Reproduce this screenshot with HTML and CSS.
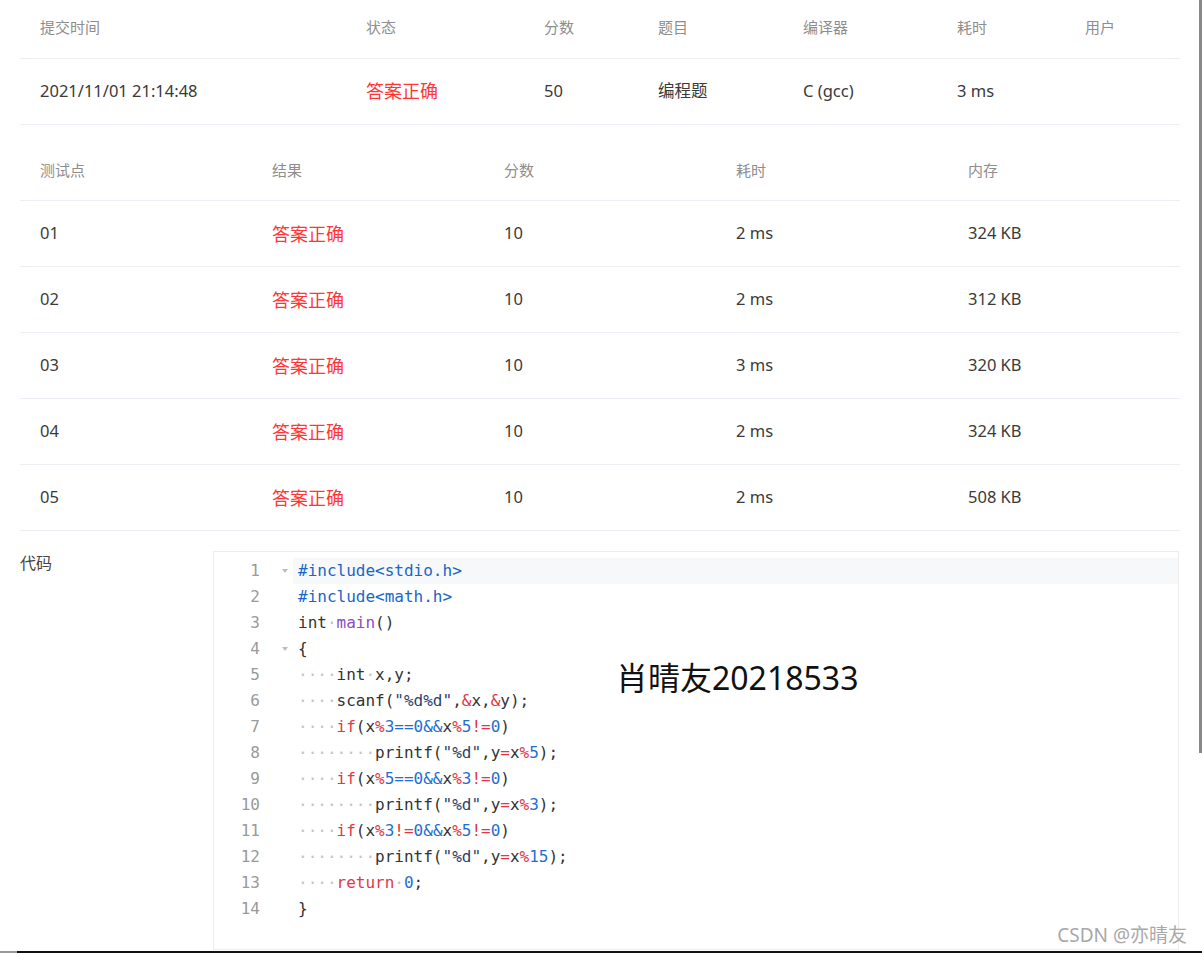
FILE: index.html
```html
<!DOCTYPE html>
<html lang="zh-CN">
<head>
    <meta charset="UTF-8">
    <meta name="viewport" content="width=device-width, initial-scale=1.0">
    <title>提交详情</title>
    <link rel="stylesheet" href="styles.css">
</head>
<body>
    <div class="page">
        <table class="submit-table">
            <colgroup>
                <col class="c-time"><col class="c-status"><col class="c-score"><col class="c-problem">
                <col class="c-compiler"><col class="c-cost"><col class="c-user">
            </colgroup>
            <tr>
                <th>提交时间</th><th>状态</th><th>分数</th><th>题目</th><th>编译器</th><th>耗时</th><th>用户</th>
            </tr>
            <tr>
                <td>2021/11/01 21:14:48</td>
                <td><span class="ok">答案正确</span></td>
                <td>50</td>
                <td>编程题</td>
                <td>C (gcc)</td>
                <td>3 ms</td>
                <td></td>
            </tr>
        </table>

        <table class="case-table">
            <tr>
                <th>测试点</th><th>结果</th><th>分数</th><th>耗时</th><th>内存</th>
            </tr>
            <tr><td>01</td><td><span class="ok">答案正确</span></td><td>10</td><td>2 ms</td><td>324 KB</td></tr>
            <tr><td>02</td><td><span class="ok">答案正确</span></td><td>10</td><td>2 ms</td><td>312 KB</td></tr>
            <tr><td>03</td><td><span class="ok">答案正确</span></td><td>10</td><td>3 ms</td><td>320 KB</td></tr>
            <tr><td>04</td><td><span class="ok">答案正确</span></td><td>10</td><td>2 ms</td><td>324 KB</td></tr>
            <tr><td>05</td><td><span class="ok">答案正确</span></td><td>10</td><td>2 ms</td><td>508 KB</td></tr>
        </table>

        <div class="code-section">
            <div class="code-label">代码</div>
            <div class="code-box">
                <div class="line active"><span class="ln">1</span><span class="fold"><i class="arrow"></i></span><span class="src"><span class="pp">#include&lt;stdio.h&gt;</span></span></div>
                <div class="line"><span class="ln">2</span><span class="fold"></span><span class="src"><span class="pp">#include&lt;math.h&gt;</span></span></div>
                <div class="line"><span class="ln">3</span><span class="fold"></span><span class="src">int<span class="ws">·</span><span class="fn">main</span>()</span></div>
                <div class="line"><span class="ln">4</span><span class="fold"><i class="arrow"></i></span><span class="src">{</span></div>
                <div class="line"><span class="ln">5</span><span class="fold"></span><span class="src"><span class="ws">····</span>int<span class="ws">·</span>x,y;</span></div>
                <div class="line"><span class="ln">6</span><span class="fold"></span><span class="src"><span class="ws">····</span>scanf(<span class="str">"%d%d"</span>,<span class="op">&amp;</span>x,<span class="op">&amp;</span>y);</span></div>
                <div class="line"><span class="ln">7</span><span class="fold"></span><span class="src"><span class="ws">····</span><span class="op">if</span>(x<span class="op">%</span><span class="num">3==0&amp;&amp;</span>x<span class="op">%</span><span class="num">5</span><span class="op">!=</span><span class="num">0</span>)</span></div>
                <div class="line"><span class="ln">8</span><span class="fold"></span><span class="src"><span class="ws">········</span>printf(<span class="str">"%d"</span>,y<span class="op">=</span>x<span class="op">%</span><span class="num">5</span>);</span></div>
                <div class="line"><span class="ln">9</span><span class="fold"></span><span class="src"><span class="ws">····</span><span class="op">if</span>(x<span class="op">%</span><span class="num">5==0&amp;&amp;</span>x<span class="op">%</span><span class="num">3</span><span class="op">!=</span><span class="num">0</span>)</span></div>
                <div class="line"><span class="ln">10</span><span class="fold"></span><span class="src"><span class="ws">········</span>printf(<span class="str">"%d"</span>,y<span class="op">=</span>x<span class="op">%</span><span class="num">3</span>);</span></div>
                <div class="line"><span class="ln">11</span><span class="fold"></span><span class="src"><span class="ws">····</span><span class="op">if</span>(x<span class="op">%</span><span class="num">3</span><span class="op">!=</span><span class="num">0&amp;&amp;</span>x<span class="op">%</span><span class="num">5</span><span class="op">!=</span><span class="num">0</span>)</span></div>
                <div class="line"><span class="ln">12</span><span class="fold"></span><span class="src"><span class="ws">········</span>printf(<span class="str">"%d"</span>,y<span class="op">=</span>x<span class="op">%</span><span class="num">15</span>);</span></div>
                <div class="line"><span class="ln">13</span><span class="fold"></span><span class="src"><span class="ws">····</span><span class="op">return</span><span class="ws">·</span><span class="num">0</span>;</span></div>
                <div class="line"><span class="ln">14</span><span class="fold"></span><span class="src">}</span></div>

                <div class="name-mark">肖晴友20218533</div>
            </div>
        </div>
    </div>

    <div class="csdn-mark">CSDN @亦晴友</div>
    <div class="scroll-strip"></div>
    <div class="screen-edge"></div>
</body>
</html>
```

FILE: styles.css
```css
body {
    margin: 0;
    padding: 0;
    background: #fff;
    color: #333;
    font-family: "Noto Sans", "Noto Sans CJK SC", sans-serif;
    position: relative;
    height: 953px;
    overflow: hidden;
}

.page {
    padding: 0 20px;
}

table {
    width: 1160px;
    border-collapse: collapse;
    table-layout: fixed;
}

th {
    height: 58px;
    padding: 0 0 4px 20px;
    box-sizing: border-box;
    text-align: left;
    font-weight: normal;
    font-size: 15px;
    color: #8e8e8e;
    border-bottom: 1px solid #ebeef5;
}

td {
    height: 66px;
    padding: 0 0 2px 20px;
    box-sizing: border-box;
    font-size: 16.5px;
    color: #3a3a3a;
    border-bottom: 1px solid #ebeef5;
    white-space: nowrap;
}

.c-time { width: 326px; }
.c-status { width: 178px; }
.c-score { width: 114px; }
.c-problem { width: 145px; }
.c-compiler { width: 154px; }
.c-cost { width: 128px; }
.c-user { width: 115px; }

.ok {
    color: #ff3636;
    font-size: 18px;
}

.case-table {
    margin-top: 18px;
}

.code-section {
    display: flex;
    margin-top: 20px;
}

.code-label {
    width: 193px;
    font-size: 16px;
    line-height: 24px;
    color: #444;
}

.code-box {
    position: relative;
    width: 966px;
    height: 399px;
    box-sizing: border-box;
    border: 1px solid #ededed;
    padding-top: 6px;
    font-family: "DejaVu Sans Mono", "Liberation Mono", monospace;
    font-size: 16px;
    color: #333;
}

.line {
    display: flex;
    height: 26px;
    line-height: 26px;
    white-space: pre;
}

.ln {
    width: 46px;
    text-align: right;
    color: #9a9a9a;
}

.fold {
    width: 33px;
    position: relative;
}

/* 小三角 */
.arrow {
    position: absolute;
    left: 22px;
    top: 11px;
    border-left: 3px solid transparent;
    border-right: 3px solid transparent;
    border-top: 4px solid #bdbdbd;
}

.src {
    flex: 1;
    padding-left: 5px;
}

.line.active .src {
    background: #f6f8fa;
}

.pp { color: #1a66c6; }
.fn { color: #8b4cc4; }
.op { color: #e03848; }
.num { color: #1f6fd2; }
.str { color: #2e3f6e; }
.ws { color: #c4c4c4; }

.name-mark {
    position: absolute;
    left: 402px;
    top: 110px;
    font-family: "Noto Sans", "Noto Sans CJK SC", sans-serif;
    font-size: 32px;
    line-height: 32px;
    color: #111;
}

.csdn-mark {
    position: absolute;
    right: 15px;
    top: 923px;
    font-size: 19px;
    line-height: 24px;
    color: #a8a8a8;
}

.scroll-strip {
    position: absolute;
    right: 0;
    top: 0;
    width: 3px;
    height: 753px;
    background: #888;
}

.screen-edge {
    position: absolute;
    left: 0;
    right: 0;
    top: 951px;
    height: 2px;
    background: #111;
    border-left: 17px solid #999;
}
```
